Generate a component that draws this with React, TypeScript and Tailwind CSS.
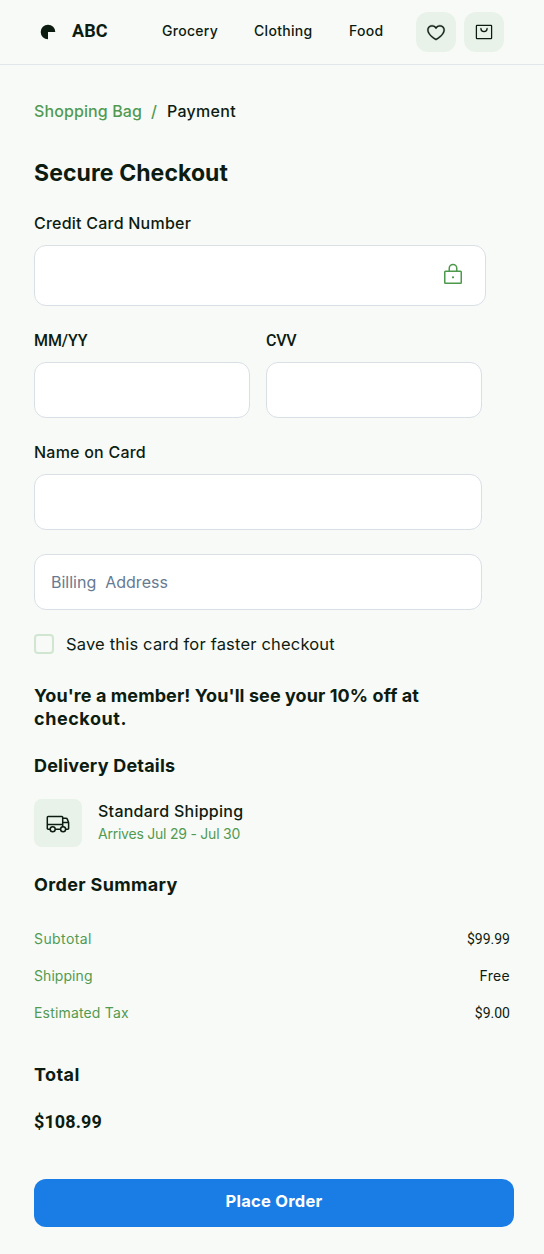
import { PiHeart, PiLock } from 'react-icons/pi';

function LogoMark() {
  return (
    <svg viewBox="0 0 16 16" className="h-4 w-4" aria-hidden="true">
      <path d="M8 8H15.3A7.3 7.3 0 1 0 8 15.3Z" fill="#0d1c10" />
    </svg>
  );
}

function BagIcon() {
  return (
    <svg viewBox="0 0 20 20" className="h-5 w-5" fill="none" stroke="currentColor" strokeWidth="1.25" strokeLinecap="round" aria-hidden="true">
      <rect x="2.4" y="3.4" width="15.2" height="13.1" rx="0.6" />
      <path d="M6.9 6.4a3.1 3.1 0 0 0 6.2 0" />
    </svg>
  );
}

function TruckIcon() {
  return (
    <svg viewBox="0 0 24 24" className="h-6 w-6" fill="none" stroke="currentColor" strokeWidth="1.5" strokeLinejoin="round" aria-hidden="true">
      <path d="M4.2 18.3H2.1a.8.8 0 0 1-.8-.8V6.4a.8.8 0 0 1 .8-.8h13.8a.8.8 0 0 1 .8.8v9.3" />
      <path d="M1.3 13.4h15.4M9.2 18.3h5.4M16.7 7.2h3.2q1 0 1.4.9l1.3 3.5v5.9a.8.8 0 0 1-.8.8h-2.2M16.7 11.6h5.9" />
      <circle cx="6.7" cy="18.3" r="2.5" />
      <circle cx="17.1" cy="18.3" r="2.5" />
    </svg>
  );
}

const field = 'block rounded-xl border border-[#d9dfe5] bg-white outline-none';

export default function App() {
  return (
    <div className="h-[1254px] w-[544px] overflow-hidden bg-[#f8faf7] font-['Inter','Liberation_Sans',sans-serif] text-[#0d1c10]">
      <header className="flex h-[65px] items-center border-b border-[#e2e6eb] pl-10 pr-10">
        <div className="flex w-[122px] items-center gap-4">
          <LogoMark />
          <span className="pb-[3px] font-['Roboto',sans-serif] text-lg font-bold leading-6 tracking-[0.1px]">ABC</span>
        </div>
        <nav className="flex flex-1 pb-[3px] text-sm font-medium leading-5">
          <a className="w-[92px] tracking-[0.27px]">Grocery</a>
          <a className="w-[95px] tracking-[0.3px]">Clothing</a>
          <a className="tracking-[0.25px]">Food</a>
        </nav>
        <div className="flex gap-2">
          <button className="flex h-10 w-10 items-center justify-center rounded-xl bg-[#e8f2e8]" aria-label="Favorites">
            <PiHeart size={20} strokeWidth={4} />
          </button>
          <button className="flex h-10 w-10 items-center justify-center rounded-xl bg-[#e8f2e8]" aria-label="Bag">
            <BagIcon />
          </button>
        </div>
      </header>

      <main className="pl-[34px] pr-[30px] pt-[34px]">
        <div className="flex text-base font-medium leading-6">
          <span className="w-[117px] tracking-[0.1px] text-[#529a52]">Shopping Bag</span>
          <span className="w-4 text-[#529a52]">/</span>
          <span className="tracking-[0.28px]">Payment</span>
        </div>

        <h1 className="mt-9 text-[23px] font-bold leading-7 tracking-[0.08px]">Secure Checkout</h1>

        <label className="mt-6 block text-base font-medium leading-6 tracking-[0.23px]">Credit Card Number</label>
        <div className={`${field} mt-2.5 flex! h-[61px] w-[452px] items-center justify-end pb-px pr-5 text-[#4c994c]`}>
          <PiLock size={24} />
        </div>

        <div className="mt-[22px] flex gap-4">
          <div className="w-[216px]">
            <label className="block pt-px font-['Roboto',sans-serif] text-base font-medium leading-6 tracking-[-0.1px]">MM/YY</label>
            <input className={`${field} mt-[9px] h-14 w-full`} />
          </div>
          <div className="w-[216px]">
            <label className="block pt-px font-['Roboto',sans-serif] text-base font-medium leading-6 tracking-[-0.3px]">CVV</label>
            <input className={`${field} mt-[9px] h-14 w-full`} />
          </div>
        </div>

        <label className="mt-[22px] block text-base font-medium leading-6 tracking-[0.23px]">Name on Card</label>
        <input className={`${field} mt-2.5 h-14 w-[448px]`} />
        <div className={`${field} mt-6 h-14 w-[448px] whitespace-pre px-4 text-base leading-[55px] text-[#687a91]`}>Billing  Address</div>

        <label className="mt-6 flex h-5 items-center gap-3 text-[16.5px] tracking-[0.18px]">
          <span className="h-5 w-5 rounded border-2 border-[#d1e6d1]" />
          Save this card for faster checkout
        </label>

        <h2 className="mt-[30px] text-lg font-bold leading-[23px] tracking-[0.08px]">
          You're a member! You'll see your 10% off at
          <br />
          <span className="tracking-[0.55px]">checkout.</span>
        </h2>

        <h2 className="mt-6 text-lg font-bold leading-[23px] tracking-[0.2px]">Delivery Details</h2>
        <div className="mt-[22px] flex h-12 gap-4">
          <div className="flex h-12 w-12 items-center justify-center rounded-lg bg-[#e8f2e8]">
            <TruckIcon />
          </div>
          <div>
            <p className="text-base font-medium leading-6 tracking-[0.26px]">Standard Shipping</p>
            <p className="text-sm leading-[21px] tracking-[-0.23px] text-[#529a52]">Arrives Jul 29 - Jul 30</p>
          </div>
        </div>

        <h2 className="mt-[26px] text-lg font-bold leading-[23px] tracking-[0.35px]">Order Summary</h2>
        <dl className="mt-[33px] flex flex-col gap-4 pr-1 text-sm leading-[21px]">
          <div className="flex h-[21px] justify-between">
            <dt className="-mt-px tracking-[0.4px] text-[#529a52]">Subtotal</dt>
            <dd className="font-['Roboto',sans-serif]">$99.99</dd>
          </div>
          <div className="flex h-[21px] justify-between">
            <dt className="-mt-px tracking-[0.06px] text-[#529a52]">Shipping</dt>
            <dd className="-mt-px tracking-[0.3px]">Free</dd>
          </div>
          <div className="flex h-[21px] justify-between">
            <dt className="-mt-px tracking-[0.17px] text-[#529a52]">Estimated Tax</dt>
            <dd className="font-['Roboto',sans-serif]">$9.00</dd>
          </div>
        </dl>

        <h2 className="mt-[39px] text-lg font-bold leading-[23px] tracking-[0.4px]">Total</h2>
        <p className="mt-6 font-['Roboto',sans-serif] text-lg font-bold leading-[23px] tracking-[0.11px]">$108.99</p>

        <button className="mt-[46px] flex h-12 w-[480px] items-center justify-center rounded-xl bg-[#1a7de6] pb-1 text-[16.5px] font-bold leading-6 tracking-[0.25px] text-white">
          Place Order
        </button>
      </main>
    </div>
  );
}
